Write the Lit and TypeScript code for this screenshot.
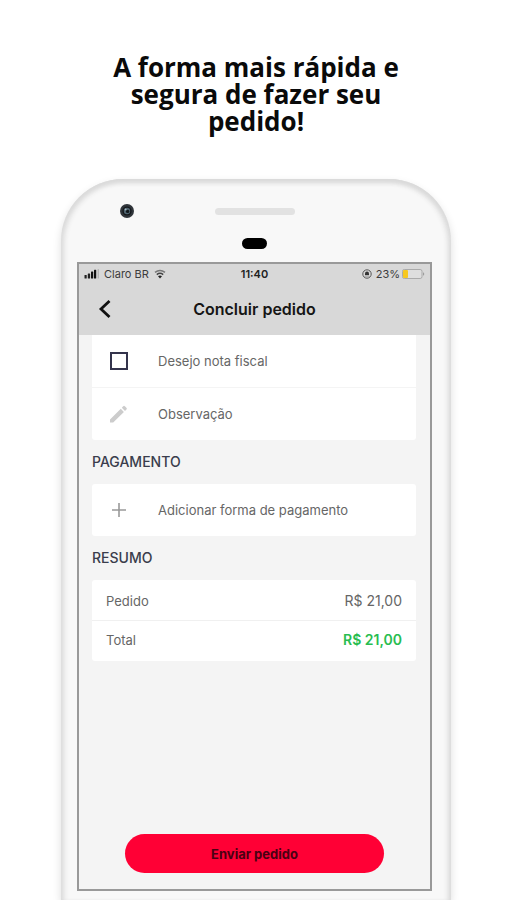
import { LitElement, html, css } from "lit";
import { customElement, property } from "lit/decorators.js";

@customElement("status-bar")
class StatusBar extends LitElement {
  @property() carrier = "";
  @property() time = "";
  @property() level = "";

  static styles = css`
    :host {
      display: grid;
      grid-template-columns: 1fr auto 1fr;
      align-items: center;
      height: 20px;
      padding: 0 5px;
      font-size: 11px;
      color: #3c3c3c;
    }
    .side {
      display: flex;
      align-items: center;
      gap: 4px;
    }
    .end {
      justify-content: flex-end;
    }
    .battery {
      margin-left: -3px;
    }
    .time {
      font-weight: 600;
      color: #222;
    }
    svg {
      display: block;
    }
  `;

  render() {
    return html`
      <div class="side">
        <svg width="16" height="10" viewBox="0 0 16 10" aria-hidden="true">
          <rect x="0.5" y="6" width="2.2" height="3.5" rx="0.6" fill="#222" />
          <rect x="3.8" y="4.5" width="2.3" height="5" rx="0.6" fill="#222" />
          <rect x="7" y="2.6" width="2.2" height="6.9" rx="0.6" fill="#111" />
          <rect x="10" y="0.8" width="2.2" height="8.7" rx="0.6" fill="#111" />
          <rect x="13.6" y="0" width="1.4" height="9.5" rx="0.5" fill="#b5b5b5" />
        </svg>
        <span>${this.carrier}</span>
        <svg width="14" height="10" viewBox="0 0 14 10" fill="none" aria-hidden="true">
          <path d="M2 3.4Q7-.6 12 3.4" stroke="#777" stroke-width="1.5" />
          <path d="M3.8 5.6Q7 3 10.2 5.6" stroke="#444" stroke-width="1.5" />
          <path d="M5 7.2Q7 5.6 9 7.2L7 9.5Z" fill="#222" />
        </svg>
      </div>
      <span class="time">${this.time}</span>
      <div class="side end">
        <svg width="10" height="10" viewBox="0 0 10 10" fill="none" aria-hidden="true">
          <circle cx="5" cy="5" r="4.2" stroke="#555" />
          <path d="M3 6V4.6a2 2 0 0 1 4 0V6Z" fill="#333" />
          <path d="M3 7h4" stroke="#777" stroke-width=".7" />
        </svg>
        <span>${this.level}</span>
        <svg class="battery" width="24" height="12" viewBox="0 0 24 12" aria-hidden="true">
          <rect x="1.5" y="1.5" width="19.5" height="9" rx="1.8" fill="#dedede" stroke="#aaa" />
          <rect x="2" y="2" width="5" height="8" rx="1" fill="#f7c81e" />
          <path d="M22 4v4l1.4-2Z" fill="#999" />
        </svg>
      </div>
    `;
  }
}

@customElement("order-screen")
class OrderScreen extends LitElement {
  static styles = css`
    :host {
      display: flex;
      flex-direction: column;
      flex: 1;
      background: #f4f4f4;
      color: #666;
      font-size: 13px;
      line-height: 16px;
    }
    header {
      padding-bottom: 1px;
      background: #d8d8d8;
    }
    .nav {
      display: grid;
      grid-template-columns: 52px 1fr 52px;
      align-items: center;
      height: 50px;
    }
    h1 {
      margin: 0;
      text-align: center;
      font-size: 16px;
      font-weight: 600;
      line-height: 20px;
      color: #151515;
    }
    button,
    input {
      font: inherit;
      color: inherit;
      border: 0;
      padding: 0;
      margin: 0;
      background: none;
      text-align: left;
    }
    .back {
      display: grid;
      place-items: center;
      height: 40px;
    }
    .content {
      flex: 1;
      padding: 0 14px 0 13px;
    }
    .card {
      background: #fff;
      border-radius: 0 0 3px 3px;
    }
    .card.round {
      border-radius: 3px;
    }
    .card.summary {
      padding: 2px 0;
    }
    .row {
      display: grid;
      grid-template-columns: 54px 1fr;
      column-gap: 12px;
      align-items: center;
      width: 100%;
      height: 52px;
    }
    .row + .row {
      border-top: 1px solid #f4f4f4;
    }
    .icon {
      justify-self: center;
      display: block;
    }
    .check {
      appearance: none;
      width: 18px;
      height: 18px;
      border: 2px solid #34344c;
      background: #fff;
    }
    .check:checked {
      background: #34344c;
    }
    .note {
      width: 100%;
      min-width: 0;
      outline: none;
    }
    .note::placeholder {
      color: #666;
      opacity: 1;
    }
    h2 {
      margin: 0;
      padding: 14px 0;
      font-size: 14px;
      font-weight: 500;
      line-height: 16px;
      color: #3a3d4c;
    }
    table {
      width: 100%;
      border-spacing: 0;
    }
    th,
    td {
      height: 38px;
      padding: 0 14px;
      font-weight: 400;
      text-align: left;
    }
    td {
      font-size: 14px;
      text-align: right;
    }
    .total th,
    .total td {
      border-top: 1px solid #f0f0f0;
    }
    .total td {
      font-weight: 600;
      color: #28bd50;
    }
    footer {
      display: flex;
      justify-content: center;
      padding: 0 46px 16px;
    }
    .send {
      flex: 1;
      height: 39px;
      border-radius: 20px;
      background: #ff0035;
      color: #4a0012;
      font-size: 13px;
      font-weight: 700;
      text-align: center;
    }
  `;

  render() {
    return html`
      <header>
        <status-bar carrier="Claro BR" time="11:40" level="23%"></status-bar>
        <div class="nav">
          <button class="back" aria-label="Voltar">
            <svg width="14" height="20" viewBox="0 0 14 20" fill="none" aria-hidden="true">
              <path d="M11.5 2 3 10 11.5 18" stroke="#111" stroke-width="2.8" />
            </svg>
          </button>
          <h1>Concluir pedido</h1>
        </div>
      </header>
      <div class="content">
        <div class="card">
          <div class="row">
            <input class="icon check" type="checkbox" id="invoice" />
            <label for="invoice">Desejo nota fiscal</label>
          </div>
          <label class="row">
            <svg class="icon" width="20" height="20" viewBox="0 0 20 20" fill="#ccc" aria-hidden="true">
              <path d="M1 15.4 11.8 4.8l3.1 3.1L4.2 18.4 1 18.6ZM12.8 3.8l1.4-1.5a1.2 1.2 0 0 1 1.7 0l1.5 1.5a1.2 1.2 0 0 1 0 1.7L16 6.9Z" />
            </svg>
            <input class="note" type="text" placeholder="Observação" aria-label="Observação" />
          </label>
        </div>
        <h2>PAGAMENTO</h2>
        <div class="card round">
          <button class="row">
            <svg class="icon" width="16" height="16" viewBox="0 0 16 16" fill="none" aria-hidden="true">
              <path d="M8 1v14M1 8h14" stroke="#999" stroke-width="1.6" />
            </svg>
            <span>Adicionar forma de pagamento</span>
          </button>
        </div>
        <h2>RESUMO</h2>
        <div class="card round summary">
          <table>
            <tr>
              <th scope="row">Pedido</th>
              <td>R$ 21,00</td>
            </tr>
            <tr class="total">
              <th scope="row">Total</th>
              <td>R$ 21,00</td>
            </tr>
          </table>
        </div>
      </div>
      <footer><button class="send">Enviar pedido</button></footer>
    `;
  }
}

@customElement("app-root")
class AppRoot extends LitElement {
  static styles = css`
    :host {
      display: flex;
      flex-direction: column;
      box-sizing: border-box;
      min-height: 100vh;
      padding: 54px 55px 0 61px;
      overflow: hidden;
      background: #fff;
      font-family: Inter, "Liberation Sans", sans-serif;
    }
    .headline {
      align-self: center;
      max-width: 320px;
      margin: 0 0 44px;
      text-align: center;
      font-family: "Open Sans", sans-serif;
      font-size: 26px;
      font-weight: 700;
      line-height: 27px;
      color: #0a0a0a;
    }
    .phone {
      flex: 1;
      display: flex;
      flex-direction: column;
      padding: 0 19px 9px 16px;
      border-radius: 62px 62px 0 0;
      background: #f8f8f8;
      box-shadow:
        inset 3px 3px 5px #dadada,
        inset -3px 3px 5px #dadada,
        0 4px 8px #dedede;
    }
    .bezel {
      display: grid;
      grid-template-columns: 1fr 80px 1fr;
      grid-template-rows: 14px auto;
      align-items: center;
      row-gap: 20px;
      padding: 25px 0 13px;
    }
    .camera {
      display: block;
      margin-left: 43px;
    }
    .speaker {
      height: 7px;
      border-radius: 4px;
      background: #e2e2e2;
    }
    .sensor {
      grid-column: 2;
      justify-self: center;
      width: 25px;
      height: 11px;
      border-radius: 6px;
      background: #000;
    }
    .glass {
      flex: 1;
      display: flex;
      flex-direction: column;
      border: 2px solid #999;
    }
  `;

  render() {
    return html`
      <h1 class="headline">A forma mais rápida e segura de fazer seu pedido!</h1>
      <div class="phone">
        <div class="bezel">
          <svg class="camera" width="14" height="14" viewBox="0 0 14 14" aria-hidden="true">
            <circle cx="7" cy="7" r="7" fill="#30353a" />
            <circle cx="7" cy="7" r="4.6" fill="#15191c" />
            <circle cx="7" cy="7" r="3.2" fill="#4f6470" />
            <circle cx="7.6" cy="7.4" r="1.7" fill="#10161a" />
            <circle cx="5.6" cy="5.4" r="0.9" fill="#a9bac2" />
          </svg>
          <div class="speaker"></div>
          <div class="sensor"></div>
        </div>
        <div class="glass"><order-screen></order-screen></div>
      </div>
    `;
  }
}
